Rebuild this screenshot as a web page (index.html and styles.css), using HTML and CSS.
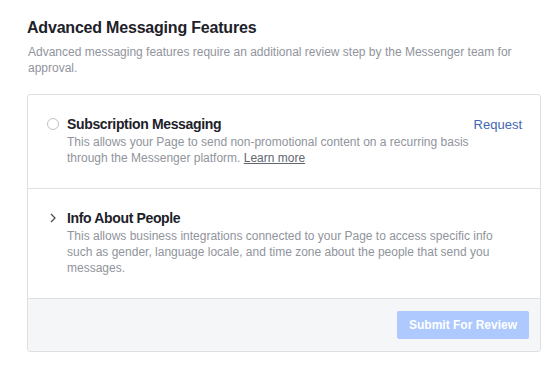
FILE: index.html
```html
<!DOCTYPE html>
<html lang="en">

<head>
    <meta charset="UTF-8">
    <meta name="viewport" content="width=device-width, initial-scale=1.0">
    <title>Advanced Messaging Features</title>
    <link rel="stylesheet" href="styles.css">
</head>

<body>
    <div class="page">
        <h2 class="page_title">Advanced Messaging Features</h2>
        <p class="page_desc">Advanced messaging features require an additional review step by the Messenger team for approval.</p>

        <div class="card">
            <div class="feature">
                <span class="feature_icon"><span class="radio"></span></span>
                <div class="feature_body">
                    <div class="feature_head">
                        <div class="feature_title">Subscription Messaging</div>
                        <a href="javascript:;" class="feature_action">Request</a>
                    </div>
                    <p class="feature_desc">This allows your Page to send non-promotional content on a recurring basis through the Messenger platform. <a href="javascript:;" class="learn">Learn more</a></p>
                </div>
            </div>
            <div class="feature">
                <span class="feature_icon">
                    <svg width="6" height="10" viewBox="0 0 6 10"><path d="M1 1l4 4-4 4" fill="none" stroke="#4b4f56" stroke-width="1.3"/></svg>
                </span>
                <div class="feature_body">
                    <div class="feature_head">
                        <div class="feature_title">Info About People</div>
                    </div>
                    <p class="feature_desc">This allows business integrations connected to your Page to access specific info such as gender, language locale, and time zone about the people that send you messages.</p>
                </div>
            </div>
            <div class="card_footer">
                <button class="submit_btn" disabled>Submit For Review</button>
            </div>
        </div>
    </div>
</body>

</html>
```

FILE: styles.css
```css
* {
    margin: 0;
    padding: 0;
    box-sizing: border-box;
}

a {
    text-decoration: none;
}

body {
    background-color: #fff;
    font-family: "Liberation Sans", Arial, sans-serif;
    color: #1d2129;
}

.page {
    width: 541px;
    padding: 18px 0 0 27px;
}

.page_title {
    font-size: 16px;
    line-height: 20px;
    font-weight: bold;
    letter-spacing: -0.2px;
    color: #1d2129;
}

.page_desc {
    margin-top: 6px;
    padding-left: 1px;
    font-size: 12px;
    line-height: 16px;
    color: #90949c;
}

.card {
    margin-top: 18px;
    border: 1px solid #dddfe2;
    border-radius: 3px;
    overflow: hidden;
}

.feature {
    display: flex;
    gap: 8px;
    padding: 20px 18px 22px 19px;
    border-bottom: 1px solid #dddfe2;
}

.feature_icon {
    display: flex;
    align-items: center;
    justify-content: center;
    width: 12px;
    height: 18px;
    flex-shrink: 0;
}

.radio {
    width: 12px;
    height: 12px;
    border: 1px solid #bec2c9;
    border-radius: 50%;
    background-color: #fff;
}

.feature_body {
    flex: 1;
}

.feature_head {
    display: flex;
    justify-content: space-between;
    align-items: baseline;
}

.feature_title {
    font-size: 14px;
    line-height: 18px;
    font-weight: bold;
    letter-spacing: -0.35px;
    color: #1d2129;
}

.feature_action {
    font-size: 13px;
    color: #4267b2;
}

.feature_desc {
    margin-top: 1px;
    padding-right: 21px;
    font-size: 12px;
    line-height: 16px;
    color: #90949c;
}

.learn {
    color: #606770;
    text-decoration: underline;
}

.card_footer {
    display: flex;
    justify-content: flex-end;
    padding: 12px 11px 12px;
    background-color: #f5f6f7;
}

.submit_btn {
    width: 132px;
    height: 28px;
    border: none;
    border-radius: 2px;
    background-color: #adc9fd;
    color: #fff;
    font-family: "Liberation Sans", Arial, sans-serif;
    font-size: 12px;
    font-weight: bold;
}
```
